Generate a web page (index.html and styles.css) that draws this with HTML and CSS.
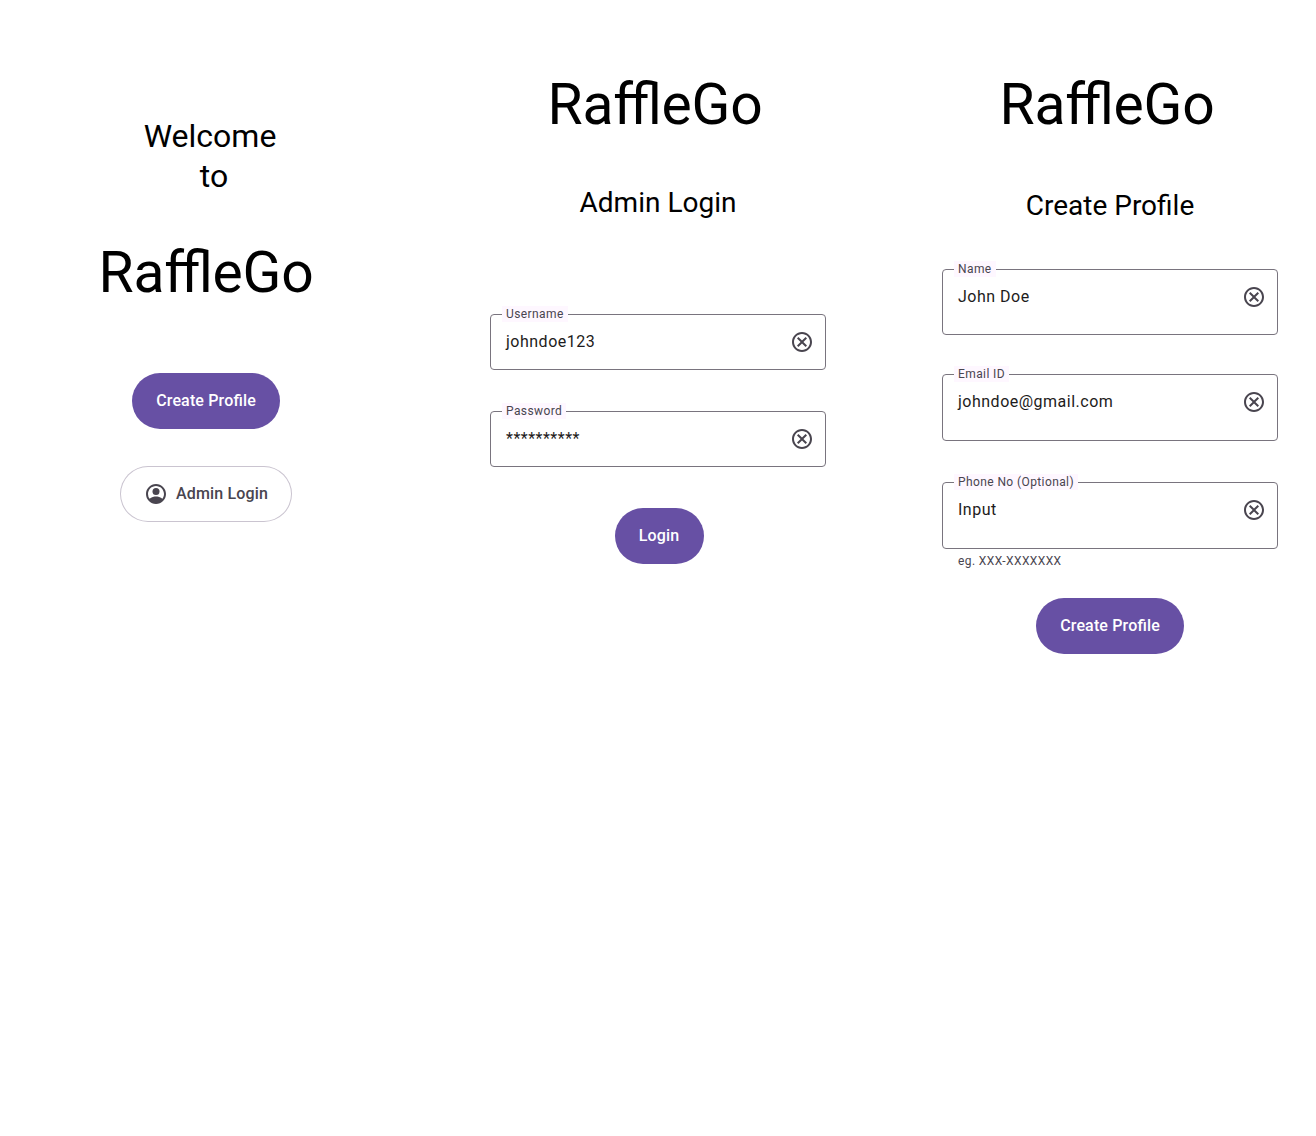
FILE: index.html
```html
<!DOCTYPE html>
<html lang="en">
<head>
<meta charset="utf-8">
<title>RaffleGo</title>
<link rel="stylesheet" href="styles.css">
</head>
<body>
<svg class="sprite" aria-hidden="true">
  <symbol id="clear" viewBox="0 0 24 24"><path d="M8.4 17L12 13.4 15.6 17 17 15.6 13.4 12 17 8.4 15.6 7 12 10.6 8.4 7 7 8.4 10.6 12 7 15.6 8.4 17zM12 2C6.47 2 2 6.47 2 12s4.47 10 10 10 10-4.47 10-10S17.53 2 12 2zm0 18c-4.41 0-8-3.59-8-8s3.59-8 8-8 8 3.59 8 8-3.59 8-8 8z"/></symbol>
  <symbol id="account" viewBox="0 0 24 24"><path fill-rule="evenodd" d="M12 2C6.48 2 2 6.48 2 12s4.48 10 10 10 10-4.48 10-10S17.52 2 12 2zM18.36 16.83C16.93 15.09 13.46 14.5 12 14.5s-4.93.59-6.36 2.33A7.95 7.95 0 0 1 4 12c0-4.41 3.59-8 8-8s8 3.59 8 8c0 1.82-.62 3.49-1.64 4.83z"/><circle cx="12" cy="9.5" r="3.5"/></symbol>
</svg>
<main class="screens">
  <section class="screen welcome">
    <p class="greeting">Welcome<br>&nbsp;to</p>
    <h1 class="brand">RaffleGo</h1>
    <button class="button filled">Create Profile</button>
    <button class="button outlined"><svg class="icon"><use href="#account"/></svg>Admin Login</button>
  </section>

  <section class="screen login">
    <h1 class="brand">RaffleGo</h1>
    <h2 class="title">Admin Login</h2>
    <form class="fields">
      <div class="field">
        <span class="label">Username</span>
        <span class="value">johndoe123</span>
        <svg class="icon"><use href="#clear"/></svg>
      </div>
      <div class="field">
        <span class="label">Password</span>
        <span class="value">**********</span>
        <svg class="icon"><use href="#clear"/></svg>
      </div>
    </form>
    <button class="button filled">Login</button>
  </section>

  <section class="screen profile">
    <h1 class="brand">RaffleGo</h1>
    <h2 class="title">Create Profile</h2>
    <form class="fields">
      <div class="field name">
        <span class="label">Name</span>
        <span class="value">John Doe</span>
        <svg class="icon"><use href="#clear"/></svg>
      </div>
      <div class="field email">
        <span class="label">Email ID</span>
        <span class="value">johndoe@gmail.com</span>
        <svg class="icon"><use href="#clear"/></svg>
      </div>
      <div class="field phone">
        <span class="label">Phone No (Optional)</span>
        <span class="value">Input</span>
        <svg class="icon"><use href="#clear"/></svg>
      </div>
      <p class="hint">eg. XXX-XXXXXXX</p>
    </form>
    <button class="button filled">Create Profile</button>
  </section>
</main>
</body>
</html>
```
FILE: styles.css
```css
* { box-sizing: border-box; }

body {
  margin: 0;
  background: #fff;
  color: #000;
  font-family: Roboto, "Liberation Sans", sans-serif;
}

h1, h2, p { margin: 0; font-weight: 400; }

.sprite { display: none; }

.screens {
  display: grid;
  grid-template-columns: repeat(3, 412px);
  column-gap: 40px;
  min-height: 1136px;
}

.screen {
  display: flex;
  flex-direction: column;
  align-items: center;
  padding-top: 73px;
}

.brand {
  padding-right: 6px;
  font-size: 57px;
  line-height: 64px;
  letter-spacing: -0.25px;
  font-feature-settings: "liga" 1;
}

.title { font-size: 28px; line-height: 36px; margin-top: 48px; }

.greeting {
  padding-left: 8px;
  font-size: 32px;
  line-height: 40px;
  text-align: center;
}

.welcome { padding-top: 116px; }
.welcome .brand { margin-top: 45px; padding-right: 0; }
.welcome .filled { margin-top: 68px; }
.welcome .outlined { margin-top: 37px; }

.button {
  display: flex;
  align-items: center;
  justify-content: center;
  gap: 8px;
  height: 56px;
  padding: 0 24px;
  border: 0;
  border-radius: 28px;
  font: 500 16px/24px Roboto, "Liberation Sans", sans-serif;
  letter-spacing: 0.15px;
  font-feature-settings: "liga" 1;
}

.filled { background: #6750a4; color: #fff; }

.outlined {
  background: transparent;
  box-shadow: inset 0 0 0 1px #cac4d0;
  color: #49454f;
}

.icon { width: 24px; height: 24px; fill: #49454f; }

.fields { display: flex; flex-direction: column; width: 336px; }

.field {
  position: relative;
  display: flex;
  align-items: flex-start;
  justify-content: space-between;
  height: 56px;
  padding: 15px 11px 0 15px;
  border: 1px solid #79747e;
  border-radius: 4px;
}

/* Floating label that interrupts the top border */
.label {
  position: absolute;
  top: -9px;
  left: 11px;
  padding: 0 4px;
  background: #fef7ff;
  color: #49454f;
  font-size: 12px;
  line-height: 16px;
  letter-spacing: 0.4px;
}

.value {
  color: #1d1b20;
  font-size: 16px;
  line-height: 24px;
  letter-spacing: 0.5px;
}

.login .fields { margin-top: 93px; gap: 41px; }
.login .button { width: 89px; margin: 41px 0 0 2px; }

.profile .title { margin-top: 51px; }
.profile .fields { margin-top: 45px; }
.profile .name { height: 66px; }
.profile .email { height: 67px; margin-top: 39px; }
.profile .phone { height: 67px; margin-top: 41px; }
.profile .button { margin-top: 29px; }

.hint {
  padding: 4px 16px 0;
  color: #49454f;
  font-size: 12px;
  line-height: 16px;
  letter-spacing: 0.4px;
}
```
